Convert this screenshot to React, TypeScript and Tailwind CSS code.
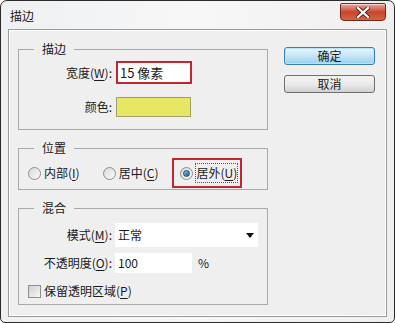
import React from "react";

const FONT = { fontFamily: '"Noto Sans CJK SC", "Noto Sans", sans-serif' };

function Mn({ children }: { children: React.ReactNode }) {
  return <span className="underline underline-offset-2">{children}</span>;
}

function Radio({ checked }: { checked?: boolean }) {
  return (
    <span className="flex h-[13px] w-[13px] items-center justify-center rounded-full border border-[#8f8f8f] bg-gradient-to-br from-[#d8d8d8] to-[#fbfbfb]">
      {checked && <span className="h-[7px] w-[7px] rounded-full bg-gradient-to-br from-[#7ec4ec] to-[#1a5a8a] border border-[#1f4f78]" />}
    </span>
  );
}

function CloseBtn() {
  return (
    <div className="flex h-[18px] w-[46px] items-center justify-center rounded-b-[4px] rounded-t-[2px] border border-[#6b2a22] bg-gradient-to-b from-[#e9a99a] via-[#c8452f] to-[#d5643f] shadow-[inset_0_1px_0_rgba(255,255,255,0.6)]">
      <svg width="14" height="11" viewBox="0 0 14 11">
        <path d="M2 1 L12 10 M12 1 L2 10" stroke="#3a2a2a" strokeWidth="4" strokeLinecap="square" />
        <path d="M2 1 L12 10 M12 1 L2 10" stroke="#ffffff" strokeWidth="2.2" strokeLinecap="square" />
      </svg>
    </div>
  );
}

export default function App() {
  return (
    <div className="h-[323px] w-[395px] bg-white" style={FONT}>
      <div className="flex h-[323px] w-[395px] flex-col rounded-t-[7px] rounded-b-[5px] border border-[#2b2b2b] bg-gradient-to-r from-[#eef0f2] via-[#f7f7f7] to-[#f1eeee] px-[7px] pb-[5px] text-[12px] text-[#1a1a1a]">
        {/* title bar */}
        <div className="flex h-[28px] items-start justify-between">
          <span className="mt-[7px] ml-[2px] text-[12px] leading-[16px]">描边</span>
          <div className="mt-[2px] mr-[1px]"><CloseBtn /></div>
        </div>

        {/* client area */}
        <div className="flex flex-1 border border-[#9a9a9a] bg-[#efefef] pl-[9px] pt-[11px] shadow-[inset_0_0_0_1px_#ffffff]">
          <div className="flex w-[250px] flex-col">
            <fieldset className="h-[89px] border border-[#a9a9a9] pl-0">
              <legend className="ml-[15px] px-[8px] text-[12px] leading-[16px]">描边</legend>
              <div className="mt-[4px] flex items-center">
                <span className="w-[93px] text-right">宽度(<Mn>W</Mn>):</span>
                <div className="ml-[4px] flex h-[23px] w-[76px] items-center border-2 border-[#c1272d] bg-white pl-[2px] text-[13px]">15 像素</div>
              </div>
              <div className="mt-[13px] flex items-center">
                <span className="w-[93px] text-right">颜色:</span>
                <div className="ml-[4px] h-[20px] w-[75px] border border-[#9f9f6a] bg-[#e7e665]" />
              </div>
            </fieldset>

            <fieldset className="mt-[10px] h-[50px] border border-[#a9a9a9]">
              <legend className="ml-[15px] px-[8px] text-[12px] leading-[16px]">位置</legend>
              <div className="mt-[2px] flex items-center">
                <div className="ml-[9px] flex items-center gap-[3px]">
                  <Radio />
                  <span>内部(<Mn>I</Mn>)</span>
                </div>
                <div className="ml-[23px] flex items-center gap-[3px]">
                  <Radio />
                  <span>居中(<Mn>C</Mn>)</span>
                </div>
                <div className="ml-[14px] flex h-[30px] w-[70px] items-center gap-[3px] border-2 border-[#c1272d] pl-[6px]">
                  <Radio checked />
                  <span className="outline-1 outline-dotted outline-[#555]">居外(<Mn>U</Mn>)</span>
                </div>
              </div>
            </fieldset>

            <fieldset className="mt-[10px] h-[105px] border border-[#a9a9a9]">
              <legend className="ml-[15px] px-[8px] text-[12px] leading-[16px]">混合</legend>
              <div className="mt-[7px] flex items-center">
                <span className="w-[93px] text-right">模式(<Mn>M</Mn>):</span>
                <div className="ml-[3px] flex h-[24px] w-[143px] items-center justify-between bg-white pl-[3px] pr-[4px]">
                  <span>正常</span>
                  <svg width="8" height="5" viewBox="0 0 8 5"><path d="M0 0 H8 L4 5 Z" fill="#111" /></svg>
                </div>
              </div>
              <div className="mt-[6px] flex items-center">
                <span className="w-[93px] text-right">不透明度(<Mn>O</Mn>):</span>
                <div className="ml-[3px] flex h-[20px] w-[77px] items-center bg-white pl-[3px]">100</div>
                <span className="ml-[6px]">%</span>
              </div>
              <div className="mt-[9px] ml-[9px] flex items-center gap-[3px]">
                <span className="h-[13px] w-[13px] border border-[#8f8f8f] bg-gradient-to-br from-[#d0d0d0] to-[#f7f7f7]" />
                <span>保留透明区域(<Mn>P</Mn>)</span>
              </div>
            </fieldset>
          </div>

          <div className="ml-[16px] mt-[6px] flex flex-col gap-[10px]">
            <button className="h-[18px] w-[91px] rounded-[3px] border border-[#3c7fb1] bg-gradient-to-b from-[#eaf6fd] via-[#c4e5f6] to-[#98d1ef] text-[12px] leading-[14px] shadow-[inset_0_0_0_1px_#b7e2f8]">确定</button>
            <button className="h-[18px] w-[91px] rounded-[3px] border border-[#707070] bg-gradient-to-b from-[#f2f2f2] via-[#ebebeb] to-[#d0d0d0] text-[12px] leading-[14px]">取消</button>
          </div>
        </div>
      </div>
    </div>
  );
}
